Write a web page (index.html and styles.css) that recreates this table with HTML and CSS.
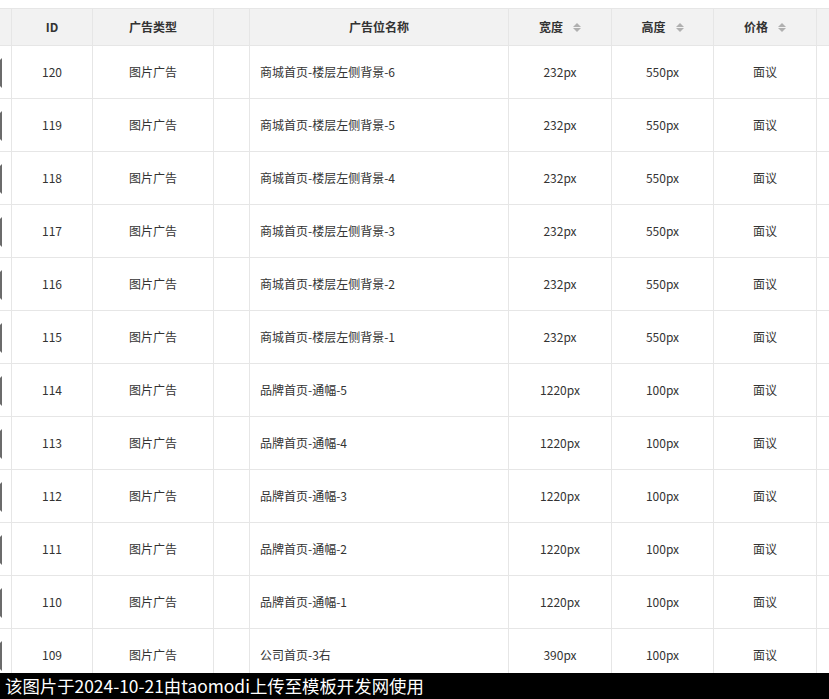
FILE: index.html
```html
<!DOCTYPE html>
<html lang="zh">
<head>
<meta charset="utf-8">
<title>广告位列表</title>
<link rel="stylesheet" href="styles.css">
</head>
<body>
<div class="page">
  <div class="table">
    <div class="row head">
      <div class="cell"></div>
      <div class="cell">ID</div>
      <div class="cell">广告类型</div>
      <div class="cell"></div>
      <div class="cell">广告位名称</div>
      <div class="cell">宽度<span class="sort"><i class="up"></i><i class="down"></i></span></div>
      <div class="cell">高度<span class="sort"><i class="up"></i><i class="down"></i></span></div>
      <div class="cell">价格<span class="sort"><i class="up"></i><i class="down"></i></span></div>
      <div class="cell"></div>
    </div>
    <div class="row"><div class="cell chk"><span class="box"></span></div><div class="cell">120</div><div class="cell">图片广告</div><div class="cell"></div><div class="cell name">商城首页-楼层左侧背景-6</div><div class="cell">232px</div><div class="cell">550px</div><div class="cell">面议</div><div class="cell"></div></div>
    <div class="row"><div class="cell chk"><span class="box"></span></div><div class="cell">119</div><div class="cell">图片广告</div><div class="cell"></div><div class="cell name">商城首页-楼层左侧背景-5</div><div class="cell">232px</div><div class="cell">550px</div><div class="cell">面议</div><div class="cell"></div></div>
    <div class="row"><div class="cell chk"><span class="box"></span></div><div class="cell">118</div><div class="cell">图片广告</div><div class="cell"></div><div class="cell name">商城首页-楼层左侧背景-4</div><div class="cell">232px</div><div class="cell">550px</div><div class="cell">面议</div><div class="cell"></div></div>
    <div class="row"><div class="cell chk"><span class="box"></span></div><div class="cell">117</div><div class="cell">图片广告</div><div class="cell"></div><div class="cell name">商城首页-楼层左侧背景-3</div><div class="cell">232px</div><div class="cell">550px</div><div class="cell">面议</div><div class="cell"></div></div>
    <div class="row"><div class="cell chk"><span class="box"></span></div><div class="cell">116</div><div class="cell">图片广告</div><div class="cell"></div><div class="cell name">商城首页-楼层左侧背景-2</div><div class="cell">232px</div><div class="cell">550px</div><div class="cell">面议</div><div class="cell"></div></div>
    <div class="row"><div class="cell chk"><span class="box"></span></div><div class="cell">115</div><div class="cell">图片广告</div><div class="cell"></div><div class="cell name">商城首页-楼层左侧背景-1</div><div class="cell">232px</div><div class="cell">550px</div><div class="cell">面议</div><div class="cell"></div></div>
    <div class="row"><div class="cell chk"><span class="box"></span></div><div class="cell">114</div><div class="cell">图片广告</div><div class="cell"></div><div class="cell name">品牌首页-通幅-5</div><div class="cell">1220px</div><div class="cell">100px</div><div class="cell">面议</div><div class="cell"></div></div>
    <div class="row"><div class="cell chk"><span class="box"></span></div><div class="cell">113</div><div class="cell">图片广告</div><div class="cell"></div><div class="cell name">品牌首页-通幅-4</div><div class="cell">1220px</div><div class="cell">100px</div><div class="cell">面议</div><div class="cell"></div></div>
    <div class="row"><div class="cell chk"><span class="box"></span></div><div class="cell">112</div><div class="cell">图片广告</div><div class="cell"></div><div class="cell name">品牌首页-通幅-3</div><div class="cell">1220px</div><div class="cell">100px</div><div class="cell">面议</div><div class="cell"></div></div>
    <div class="row"><div class="cell chk"><span class="box"></span></div><div class="cell">111</div><div class="cell">图片广告</div><div class="cell"></div><div class="cell name">品牌首页-通幅-2</div><div class="cell">1220px</div><div class="cell">100px</div><div class="cell">面议</div><div class="cell"></div></div>
    <div class="row"><div class="cell chk"><span class="box"></span></div><div class="cell">110</div><div class="cell">图片广告</div><div class="cell"></div><div class="cell name">品牌首页-通幅-1</div><div class="cell">1220px</div><div class="cell">100px</div><div class="cell">面议</div><div class="cell"></div></div>
    <div class="row"><div class="cell chk"><span class="box"></span></div><div class="cell">109</div><div class="cell">图片广告</div><div class="cell"></div><div class="cell name">公司首页-3右</div><div class="cell">390px</div><div class="cell">100px</div><div class="cell">面议</div><div class="cell"></div></div>
  </div>
</div>
<div class="watermark">该图片于2024-10-21由taomodi上传至模板开发网使用</div>
</body>
</html>
```
FILE: styles.css
```css
html, body {
  margin: 0;
  padding: 0;
  height: 699px;
  overflow: hidden;
  background: #fff;
}
body {
  font-family: "Noto Sans CJK SC", "Microsoft YaHei", sans-serif;
  color: #333;
  font-size: 12px;
}
.page {
  padding-top: 8px;
  overflow: hidden;
  width: 829px;
}
.table {
  margin-left: -29px;
  width: 1000px;
  border-top: 1px solid #e6e6e6;
}
.row {
  display: grid;
  grid-template-columns: 41px 81px 121px 36px 259px 103px 102px 103px 150px;
  height: 53px;
  border-bottom: 1px solid #e6e6e6;
  box-sizing: border-box;
}
.row.head {
  height: 37px;
  background: #f2f2f2;
  font-weight: bold;
}
.cell {
  box-sizing: border-box;
  border-right: 1px solid #e6e6e6;
  display: flex;
  align-items: center;
  justify-content: center;
  white-space: nowrap;
  line-height: 16px;
}
.cell.name {
  justify-content: flex-start;
  padding-left: 10px;
}
.cell.chk {
  justify-content: flex-start;
}
.box {
  display: block;
  margin-left: 11px;
  width: 20px;
  height: 30px;
  box-sizing: border-box;
  border: 2px solid #6b6b6b;
  border-left: none;
  border-top-color: transparent;
  border-bottom-color: transparent;
  margin-top: 2px;
}
.sort {
  display: inline-flex;
  flex-direction: column;
  gap: 1px;
  margin-left: 10px;
}
.sort i {
  display: block;
  width: 0;
  height: 0;
  border-left: 4px solid transparent;
  border-right: 4px solid transparent;
}
.sort .up {
  border-bottom: 4px solid #b0b0b0;
}
.sort .down {
  border-top: 4px solid #b0b0b0;
}
.watermark {
  position: fixed;
  left: 0;
  right: 0;
  bottom: 0;
  height: 26px;
  background: #000;
  color: #fff;
  font-size: 17.4px;
  line-height: 26px;
  padding-left: 5px;
  white-space: nowrap;
}
```
